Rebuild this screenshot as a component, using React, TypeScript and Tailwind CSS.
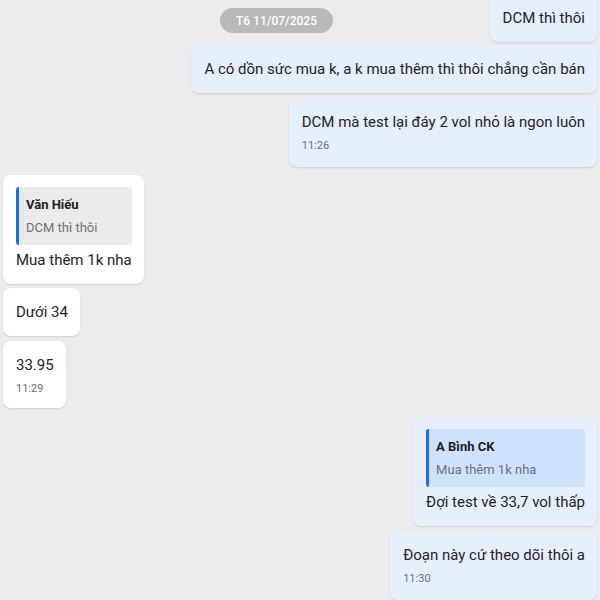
import React from "react";

const font = { fontFamily: "Roboto, 'Noto Sans', sans-serif" };

function Time({ t }: { t: string }) {
  return <div className="mt-1 text-[11px] leading-4 text-[#6b7075]">{t}</div>;
}

function Quote({ name, text, mine }: { name: string; text: string; mine?: boolean }) {
  return (
    <div
      className={`mb-[3px] rounded-[3px] border-l-[3px] border-[#1a6fe8] pl-[7px] pr-3 pt-2 pb-[7px] ${
        mine ? "bg-[#cfe2fb]" : "bg-[#eaeaec]"
      }`}
    >
      <div className="text-[13px] font-bold leading-5 text-[#202124]">{name}</div>
      <div className="mt-[3px] text-[13px] leading-5 text-[#6b7280]">{text}</div>
    </div>
  );
}

function Bubble({
  mine,
  children,
  className = "",
}: {
  mine?: boolean;
  children: React.ReactNode;
  className?: string;
}) {
  return (
    <div
      className={`max-w-[420px] rounded-lg pl-[13px] pr-3 pt-3 pb-3 text-[15px] leading-6 text-[#1f2328] shadow-[0_1px_2px_rgba(0,0,0,0.12)] ${
        mine ? "self-end bg-[#e5effc]" : "self-start bg-white"
      } ${className}`}
    >
      {children}
    </div>
  );
}

export default function App() {
  return (
    <div style={font} className="relative h-[600px] w-[600px] overflow-hidden bg-[#ebebed]">
      <div className="flex flex-col px-[3px] mt-[-6px]">
        <Bubble mine>DCM thì thôi</Bubble>
        <Bubble mine className="mt-[3px]">A có dồn sức mua k, a k mua thêm thì thôi chẳng cần bán</Bubble>
        <Bubble mine className="mt-[5px] pb-[13px]">
          <div>DCM mà test lại đáy 2 vol nhỏ là ngon luôn</div>
          <Time t="11:26" />
        </Bubble>
        <Bubble className="mt-[8px]">
          <Quote name="Văn Hiếu" text="DCM thì thôi" />
          <div>Mua thêm 1k nha</div>
        </Bubble>
        <Bubble className="mt-[4px]">Dưới 34</Bubble>
        <Bubble className="mt-[5px] pb-[11px]">
          <div>33.95</div>
          <Time t="11:29" />
        </Bubble>
        <Bubble mine className="mt-[9px]">
          <Quote mine name="A Bình CK" text="Mua thêm 1k nha" />
          <div>Đợi test về 33,7 vol thấp</div>
        </Bubble>
        <Bubble mine className="mt-[5px] pb-[13px]">
          <div>Đoạn này cứ theo dõi thôi a</div>
          <Time t="11:30" />
        </Bubble>
      </div>
      <div className="absolute left-[220px] top-[8px] flex h-[25px] w-[113px] items-center justify-center rounded-full bg-[#b9b9bb] text-[12px] font-medium text-white">
        T6 11/07/2025
      </div>
    </div>
  );
}
